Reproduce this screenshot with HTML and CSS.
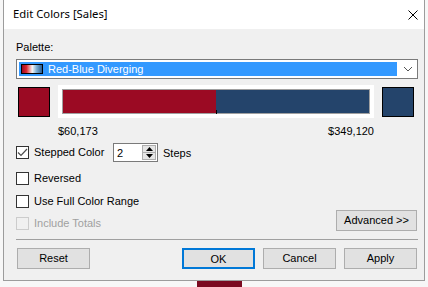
FILE: index.html
```html
<!DOCTYPE html>
<html>
<head>
<meta charset="utf-8">
<link rel="stylesheet" href="styles.css">
</head>
<body>
<div class="dialog">
  <div class="titlebar">
    <span class="title">Edit Colors [Sales]</span>
    <svg class="close" width="10" height="10" viewBox="0 0 10 10"><path d="M0.5 0.5L9.5 9.5M9.5 0.5L0.5 9.5" stroke="#000" stroke-width="1" fill="none"/></svg>
  </div>
  <div class="content">
    <div class="label">Palette:</div>
    <div class="select">
      <div class="sel-highlight"><span class="grad"></span><span class="sel-text">Red-Blue Diverging</span></div>
      <svg class="chev" width="10" height="6" viewBox="0 0 10 6"><path d="M1 1L5 5L9 1" stroke="#555" stroke-width="1" fill="none"/></svg>
    </div>
    <div class="ramp-row">
      <div class="swatch red"></div>
      <div class="ramp-box">
        <div class="ramp">
          <div class="half red"></div>
          <div class="half blue"></div>
          <span class="tick"></span>
        </div>
      </div>
      <div class="swatch blue"></div>
    </div>
    <div class="values"><span>$60,173</span><span>$349,120</span></div>
    <div class="row stepped">
      <div class="check wide"><span class="box"><svg width="11" height="11" viewBox="0 0 11 11"><path d="M1 5.5L4 8.5L10 2" stroke="#4d4d4d" stroke-width="1.2" fill="none"/></svg></span>Stepped Color</div>
      <div class="spinner">
        <span class="spin-val">2</span>
        <div class="spin-btns">
          <span class="spin-btn"><svg width="7" height="4" viewBox="0 0 7 4"><path d="M3.5 0L7 4H0Z" fill="#000"/></svg></span>
          <span class="spin-btn"><svg width="7" height="4" viewBox="0 0 7 4"><path d="M0 0H7L3.5 4Z" fill="#000"/></svg></span>
        </div>
      </div>
      <span class="steps">Steps</span>
    </div>
    <div class="row checkrow">
      <div class="check"><span class="box"></span>Reversed</div>
    </div>
    <div class="row checkrow">
      <div class="check"><span class="box"></span>Use Full Color Range</div>
    </div>
    <div class="row lastrow">
      <div class="check disabled"><span class="box"></span>Include Totals</div>
      <button class="btn adv">Advanced &gt;&gt;</button>
    </div>
    <div class="sep"></div>
    <div class="buttons">
      <button class="btn">Reset</button>
      <div class="btn-group">
        <button class="btn default">OK</button>
        <button class="btn">Cancel</button>
        <button class="btn">Apply</button>
      </div>
    </div>
  </div>
</div>
<div class="under"><div class="under-block"></div></div>
</body>
</html>
```
FILE: styles.css
```css
html, body {
  margin: 0;
  padding: 0;
}
body {
  width: 428px;
  height: 287px;
  overflow: hidden;
  background: #f7f7f7;
  font-family: "Liberation Sans", Arial, sans-serif;
  font-size: 11px;
  color: #000;
}
.dialog {
  margin-left: 3px;
  width: 422px;
  box-sizing: border-box;
  border: 1px solid #9c9c9c;
  border-top: 0;
  background: #f0f0f0;
}
.titlebar {
  height: 29px;
  background: #fff;
  display: flex;
  align-items: center;
  justify-content: space-between;
  padding: 0 6px 0 9px;
}
.title {
  font-family: "Noto Sans", sans-serif;
  font-size: 11.3px;
  line-height: 16px;
  margin-top: -1px;
}
.close {
  display: block;
}
.content {
  padding: 11px 6px 11px 12px;
}
.label {
  line-height: 14px;
  height: 14px;
}
.select {
  margin-top: 5px;
  height: 20px;
  box-sizing: border-box;
  border: 1px solid #7a7a7a;
  background: #fff;
  display: flex;
  align-items: center;
  padding: 2px;
}
.sel-highlight {
  width: 378px;
  height: 14px;
  background: #3399ff;
  display: flex;
  align-items: center;
  gap: 5px;
  padding-left: 2px;
  box-sizing: border-box;
  color: #fff;
}
.grad {
  width: 22px;
  height: 10px;
  box-sizing: border-box;
  border: 1px solid #000;
  background: linear-gradient(90deg, #9b0a23 0%, #d9262f 22%, #f4dede 48%, #f4f4f4 52%, #7eb0d6 72%, #2b5c8e 100%);
}
.sel-text {
  line-height: 14px;
}
.chev {
  margin-left: 6px;
  display: block;
}
.ramp-row {
  margin-top: 6px;
  height: 33px;
  display: flex;
  align-items: center;
  gap: 8px;
  padding-left: 2px;
}
.swatch {
  width: 32px;
  height: 30px;
  box-sizing: border-box;
  border: 1px solid #000;
}
.red {
  background: #9b0a23;
}
.blue {
  background: #24446b;
}
.ramp-box {
  width: 316px;
  height: 33px;
  box-sizing: border-box;
  padding: 4px;
  background: #fff;
}
.ramp {
  position: relative;
  height: 25px;
  box-sizing: border-box;
  border: 1px solid #a0a0a0;
  display: flex;
}
.half {
  flex: 1;
}
.tick {
  position: absolute;
  left: 153px;
  bottom: -1px;
  width: 1px;
  height: 4px;
  background: #000;
}
.values {
  margin: 6px 0 0 42px;
  width: 316px;
  display: flex;
  justify-content: space-between;
  line-height: 14px;
  height: 14px;
}
.row {
  display: flex;
}
.stepped {
  margin-top: 5px;
  height: 19px;
  align-items: center;
}
.check {
  display: flex;
  align-items: center;
  line-height: 13px;
}
.check.wide {
  width: 97px;
}
.box {
  width: 13px;
  height: 13px;
  box-sizing: border-box;
  border: 1px solid #333;
  background: #fff;
  margin-right: 5px;
  display: flex;
  align-items: center;
  justify-content: center;
}
.box svg {
  display: block;
}
.check.disabled {
  color: #a0a0a0;
}
.check.disabled .box {
  border-color: #cccccc;
  background: #f0f0f0;
}
.spinner {
  width: 45px;
  height: 19px;
  box-sizing: border-box;
  border: 1px solid #7a7a7a;
  background: #fff;
  display: flex;
  align-items: center;
  justify-content: space-between;
  padding: 0 1px 0 3px;
}
.spin-val {
  line-height: 14px;
}
.spin-btns {
  width: 14px;
  height: 15px;
  box-sizing: border-box;
  border: 1px solid #adadad;
  background: #e5e5e5;
  display: flex;
  flex-direction: column;
}
.spin-btn {
  flex: 1;
  display: flex;
  align-items: center;
  justify-content: center;
}
.spin-btn + .spin-btn {
  border-top: 1px solid #adadad;
}
.spin-btn svg {
  display: block;
}
.steps {
  margin-left: 5px;
  line-height: 14px;
}
.checkrow {
  margin-top: 10px;
  height: 13px;
}
.lastrow {
  margin-top: 2px;
  height: 21px;
  align-items: flex-end;
  justify-content: space-between;
  padding-right: 1px;
}
.lastrow .check {
  margin-bottom: 1px;
}
.btn {
  font-family: "Liberation Sans", Arial, sans-serif;
  font-size: 11px;
  color: #000;
  height: 21px;
  width: 73px;
  box-sizing: border-box;
  border: 1px solid #adadad;
  background: #e1e1e1;
  padding: 0;
  margin: 0;
  line-height: 19px;
  text-align: center;
}
.btn.adv {
  width: 81px;
}
.btn.default {
  border: 2px solid #0078d7;
}
.sep {
  margin-top: 8px;
  height: 1px;
  background: #a0a0a0;
}
.buttons {
  margin-top: 8px;
  display: flex;
  justify-content: space-between;
  padding: 0 1px;
}
.btn-group {
  display: flex;
  gap: 8px;
}
.under {
  height: 6px;
  padding-left: 197px;
}
.under-block {
  width: 45px;
  height: 6px;
  background: #7b0a21;
}
```
